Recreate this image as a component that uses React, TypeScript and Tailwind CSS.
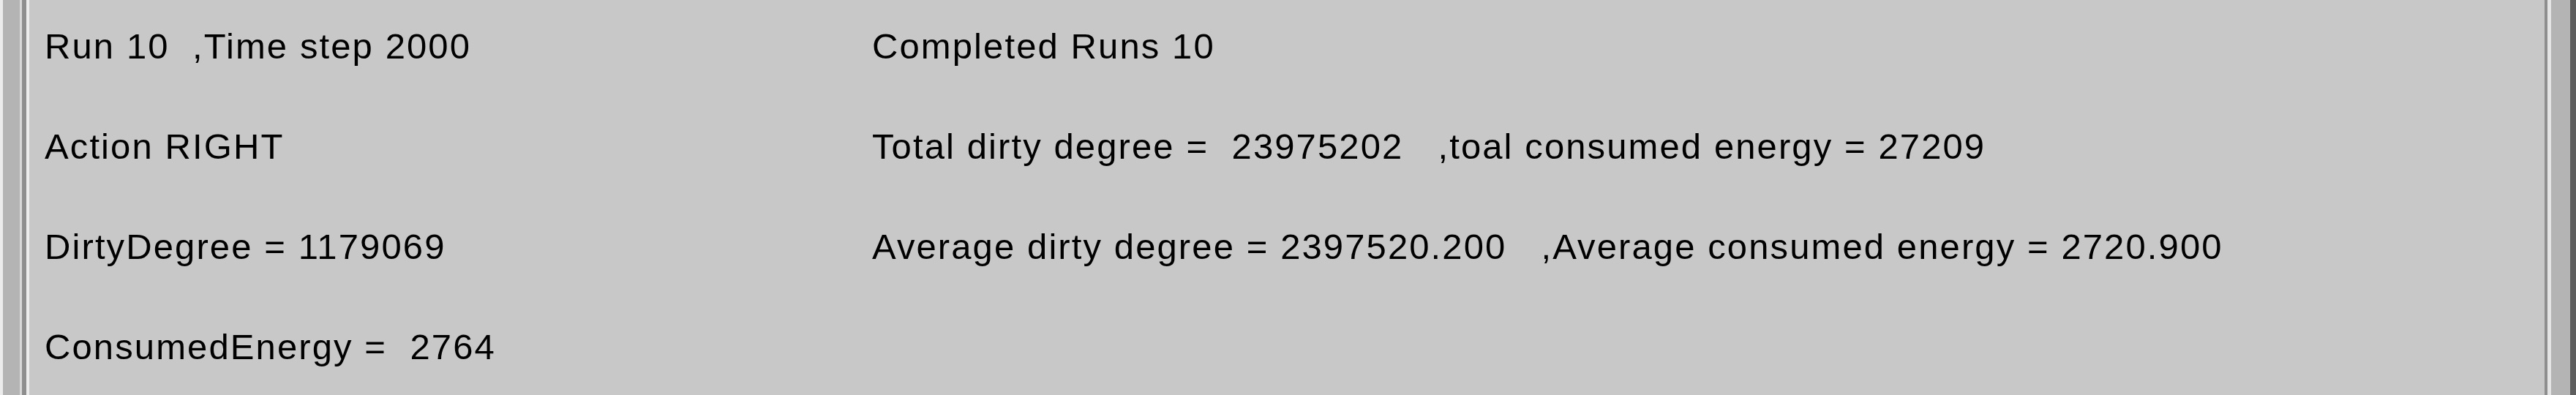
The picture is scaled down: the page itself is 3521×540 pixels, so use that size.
const left = [
  'Run 10  ,Time step 2000',
  'Action RIGHT',
  'DirtyDegree = 1179069',
  'ConsumedEnergy =  2764',
]

const right = [
  'Completed Runs 10',
  'Total dirty degree =  23975202   ,toal consumed energy = 27209',
  'Average dirty degree = 2397520.200   ,Average consumed energy = 2720.900',
  '',
]

export default function App() {
  return (
    <div className="flex h-[540px] w-[3521px] overflow-hidden bg-[#c8c8c8]">
      {/* left frame edge */}
      <div className="w-[4px] bg-[#ececec]" />
      <div className="w-[23px] bg-[#b4b4b4]" />
      <div className="w-[3px] bg-[#d8d8d8]" />
      <div className="w-[6px] bg-[#8e8e8e]" />
      <div className="w-[4px] bg-[#ececec]" />

      {/* status text */}
      <div className="flex-1 pl-[21px] pt-[37px]">
        <div className="grid grid-cols-[1131px_1fr] gap-y-[85px]">
          {left.map((l, i) => (
            <div key={i} className="contents">
              <p className="whitespace-pre font-['Liberation_Sans',Arial,sans-serif] text-[49px] leading-[52px] tracking-[2.1px] text-black">
                {l}
              </p>
              <p className="whitespace-pre font-['Liberation_Sans',Arial,sans-serif] text-[49px] leading-[52px] tracking-[2.1px] text-black">
                {right[i]}
              </p>
            </div>
          ))}
        </div>
      </div>

      {/* right frame edge */}
      <div className="w-[4px] bg-[#8e8e8e]" />
      <div className="w-[5px] bg-[#e4e4e4]" />
      <div className="w-[26px] bg-[#b4b4b4]" />
      <div className="w-[8px] bg-[#5e5e5e]" />
    </div>
  )
}
